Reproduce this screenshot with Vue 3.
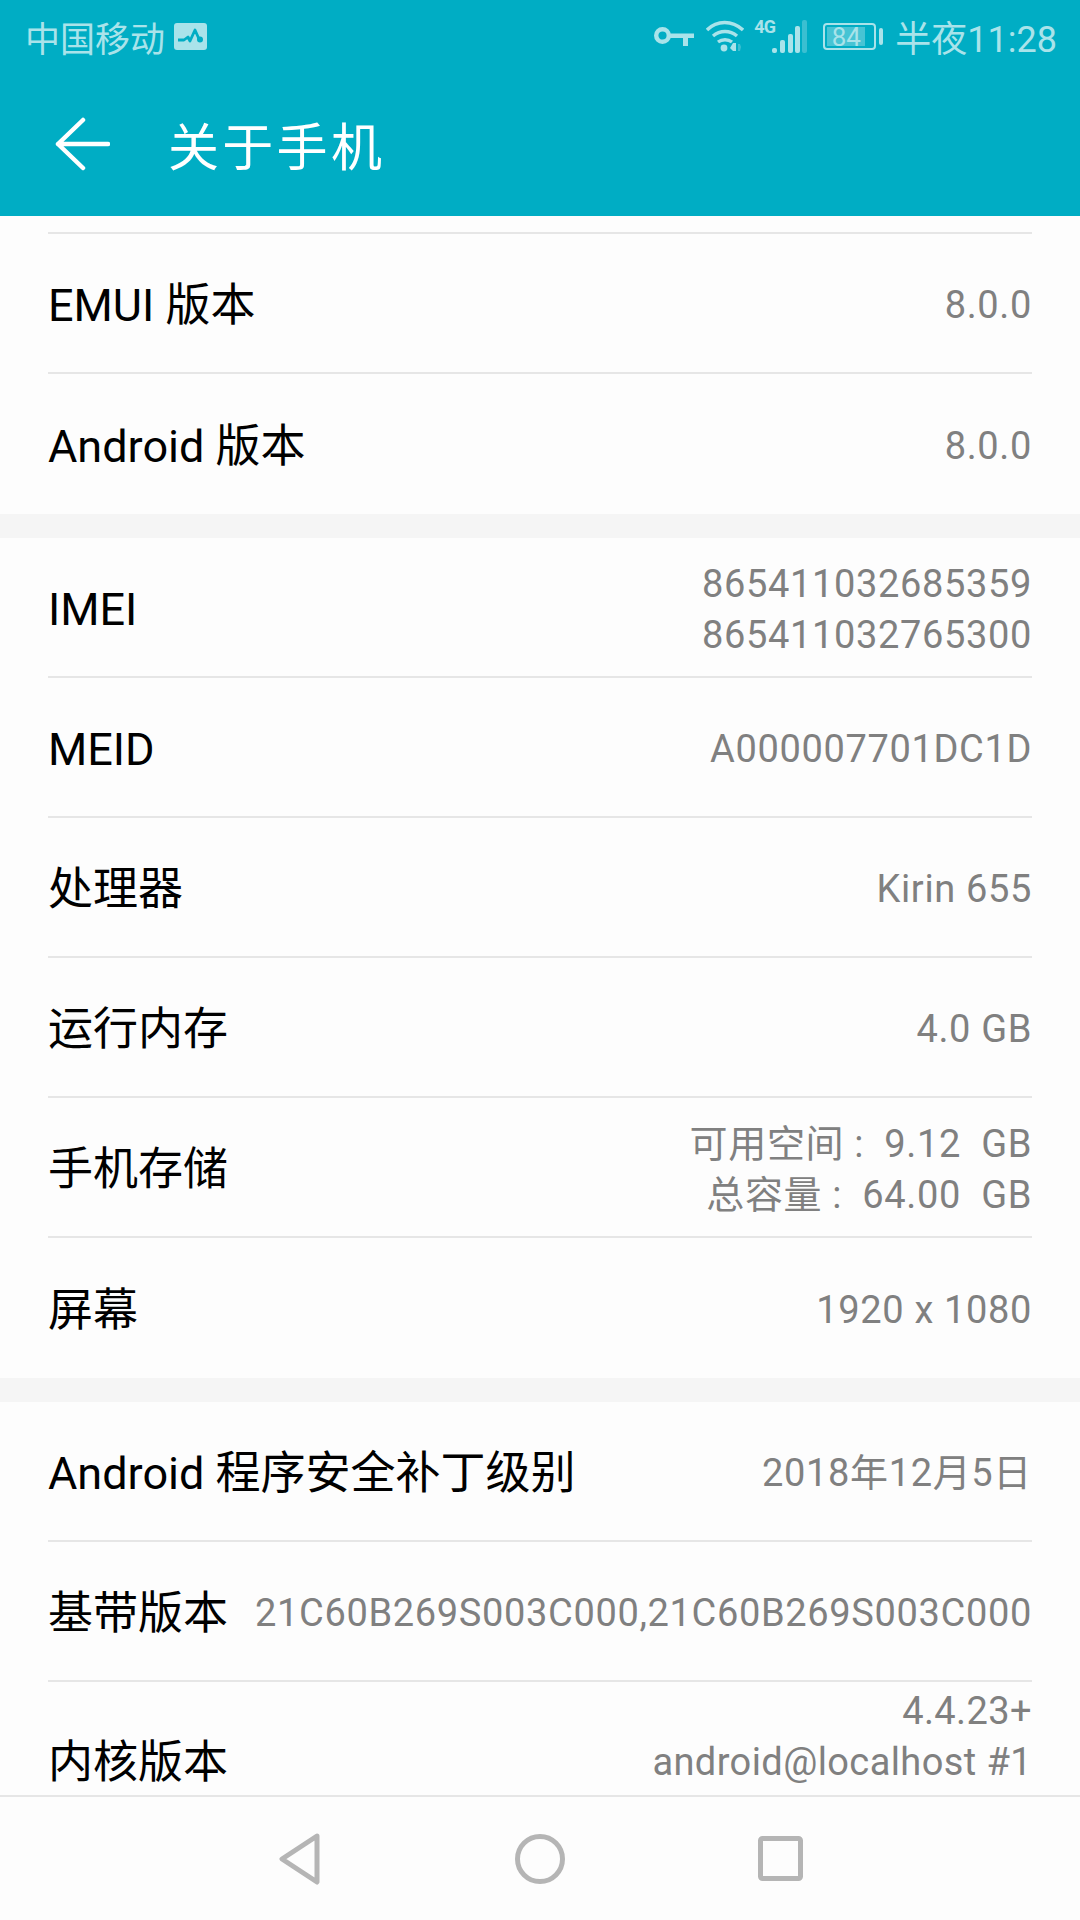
<script setup>
const groups = [
  [
    { label: 'EMUI 版本', values: ['8.0.0'] },
    { label: 'Android 版本', values: ['8.0.0'] },
  ],
  [
    { label: 'IMEI', values: ['865411032685359', '865411032765300'] },
    { label: 'MEID', values: ['A000007701DC1D'] },
    { label: '处理器', values: ['Kirin 655'] },
    { label: '运行内存', values: ['4.0 GB'] },
    { label: '手机存储', values: ['可用空间 :  9.12  GB', '总容量 :  64.00  GB'] },
    { label: '屏幕', values: ['1920 x 1080'] },
  ],
  [
    { label: 'Android 程序安全补丁级别', values: ['2018年12月5日'] },
    { label: '基带版本', values: ['21C60B269S003C000,21C60B269S003C000'] },
    { label: '内核版本', values: ['4.4.23+', 'android@localhost #1', '\u00a0'], tall: true },
  ],
]
</script>

<template>
  <div class="phone">
    <header class="appbar">
      <div class="status">
        <div class="status-left">
          <span class="carrier">中国移动</span>
          <svg class="sim" width="33" height="27" viewBox="0 0 33 27">
            <rect width="33" height="27" rx="3" fill="#a9e3ea" />
            <path d="M4 17h6l4-3 2 4 5-11 4 9" fill="none" stroke="#00adc4" stroke-width="2.800" stroke-linejoin="round" />
            <circle cx="26" cy="16.500" r="3" fill="#00adc4" />
          </svg>
        </div>
        <div class="status-right">
          <svg class="key" width="40" height="19" viewBox="0 0 40 19">
            <circle cx="8.500" cy="8.500" r="6.300" fill="none" stroke="#a9e3ea" stroke-width="4.400" />
            <path d="M14 6.500h26v4.500h-6v8h-5v-8H14z" fill="#a9e3ea" />
          </svg>
          <svg class="wifi" width="38" height="32" viewBox="0 0 38 32">
            <g fill="none" stroke="#a9e3ea" stroke-width="3.400">
              <path d="M1 10C11 0 26 0 37 10" />
              <path d="M7 16c7-6 17-6 24 0" />
              <path d="M12 22c4-3 10-3 14 0" />
            </g>
            <circle cx="18" cy="28" r="3.400" fill="#a9e3ea" />
            <path d="M27 23h3v8h-3l-3-3z" fill="#a9e3ea" />
            <path d="M32 24h2l1 3-1 4h-2z" fill="#a9e3ea" opacity="0.35" />
          </svg>
          <div class="net">
            <span class="net-label">4G</span>
            <svg class="signal" width="35" height="33" viewBox="0 0 35 33">
              <rect x="0" y="28" width="5" height="5" rx="2" fill="#a9e3ea" />
              <rect x="8" y="20" width="5" height="13" rx="2" fill="#a9e3ea" />
              <rect x="16" y="14" width="5" height="19" rx="2" fill="#a9e3ea" />
              <rect x="23" y="6" width="5" height="27" rx="2" fill="#a9e3ea" />
              <rect x="30" y="0" width="5" height="33" rx="2" fill="#a9e3ea" opacity="0.35" />
            </svg>
          </div>
          <div class="battery">
            <div class="battery-body"><span class="battery-fill">84</span></div>
            <span class="battery-nub"></span>
          </div>
          <span class="clock">半夜11:28</span>
        </div>
      </div>
      <div class="toolbar">
        <svg class="back" width="56" height="56" viewBox="0 0 56 56">
          <path d="M29 4L4 28l25 24M4 28h50" fill="none" stroke="#fff" stroke-width="4.500" stroke-linecap="round" stroke-linejoin="round" />
        </svg>
        <h1 class="title">关于手机</h1>
      </div>
    </header>

    <main class="content">
      <div class="cut-row"></div>
      <section v-for="(group, i) in groups" :key="i" class="group">
        <div v-for="row in group" :key="row.label" class="row" :class="{ tall: row.tall }">
          <span class="label">{{ row.label }}</span>
          <div class="value">
            <div v-for="line in row.values" :key="line">{{ line }}</div>
          </div>
        </div>
      </section>
    </main>

    <nav class="navbar">
      <svg width="44" height="52" viewBox="0 0 44 52">
        <path d="M39 3L4 26l35 23z" fill="none" stroke="#b5b5b5" stroke-width="5" stroke-linejoin="round" />
      </svg>
      <svg class="home" width="50" height="50" viewBox="0 0 50 50">
        <circle cx="25" cy="25" r="22.500" fill="none" stroke="#b5b5b5" stroke-width="5" />
      </svg>
      <svg width="45" height="45" viewBox="0 0 45 45">
        <rect x="2.500" y="2.500" width="40" height="40" rx="2" fill="none" stroke="#b5b5b5" stroke-width="5" />
      </svg>
    </nav>
  </div>
</template>

<style>
html, body {
  margin: 0;
  background: #fdfdfd;
}
</style>

<style scoped>
.phone {
  width: 1080px;
  height: 1920px;
  display: flex;
  flex-direction: column;
  overflow: hidden;
  background: #fdfdfd;
  font-family: Roboto, "Noto Sans CJK SC", sans-serif;
}

.appbar {
  height: 216px;
  flex: none;
  background: #00adc4;
}

.status {
  height: 72px;
  display: flex;
  align-items: center;
  justify-content: space-between;
  padding: 0 23px 0 25px;
  color: #a9e3ea;
}

.status-left,
.status-right {
  display: flex;
  align-items: center;
}

.carrier {
  font-size: 35px;
}

.sim {
  margin-left: 9px;
}

.wifi {
  margin-left: 12px;
}

.net {
  display: flex;
  align-items: flex-end;
  margin-left: 10px;
  height: 33px;
}

.net-label {
  width: 18px;
  font-size: 18px;
  font-weight: 700;
  line-height: 14px;
  letter-spacing: -1px;
  align-self: flex-start;
}

.battery {
  display: flex;
  align-items: center;
  margin-left: 16px;
}

.battery-body {
  width: 53px;
  height: 27px;
  box-sizing: border-box;
  border: 2px solid #a9e3ea;
  border-radius: 4px;
  padding: 2px;
  display: flex;
}

.battery-fill {
  width: 84%;
  background: rgba(255, 255, 255, 0.28);
  font-size: 26px;
  line-height: 20px;
  text-align: center;
  overflow: visible;
}

.battery-nub {
  width: 4px;
  height: 17px;
  margin-left: 3px;
  border-radius: 2px;
  background: #a9e3ea;
}

.clock {
  font-size: 36px;
  margin-left: 12px;
}

.toolbar {
  height: 144px;
  display: flex;
  align-items: center;
  padding-left: 54px;
}

.back {
  flex: none;
}

.title {
  margin: 0 0 0 58px;
  font-size: 51px;
  font-weight: 400;
  letter-spacing: 3.300px;
  color: #fff;
}

.content {
  flex: 1;
  min-height: 0;
  overflow: hidden;
}

.cut-row {
  height: 16px;
  margin: 0 48px;
  border-bottom: 2px solid #e6e6e6;
}

.group {
  padding: 0 48px;
}

.group + .group {
  border-top: 24px solid #f5f5f5;
}

.row {
  height: 140px;
  box-sizing: border-box;
  display: flex;
  align-items: center;
  justify-content: space-between;
  gap: 20px;
  border-bottom: 2px solid #e6e6e6;
}

.group > .row:last-child {
  border-bottom: none;
}

.row.tall {
  height: 156px;
}

.label {
  flex: none;
  font-size: 45px;
  line-height: 52px;
  margin-top: 5px;
  color: #000;
}

.value {
  padding-top: 5px;
  font-size: 38px;
  line-height: 51px;
  text-align: right;
  white-space: pre;
  color: #808080;
  letter-spacing: 0.650px;
}

.row.tall .value {
  letter-spacing: 0.400px;
}

.navbar {
  height: 125px;
  flex: none;
  box-sizing: border-box;
  border-top: 2px solid #e6e6e6;
  display: flex;
  align-items: center;
  justify-content: center;
  gap: 193px;
  background: #fdfdfd;
}
</style>
